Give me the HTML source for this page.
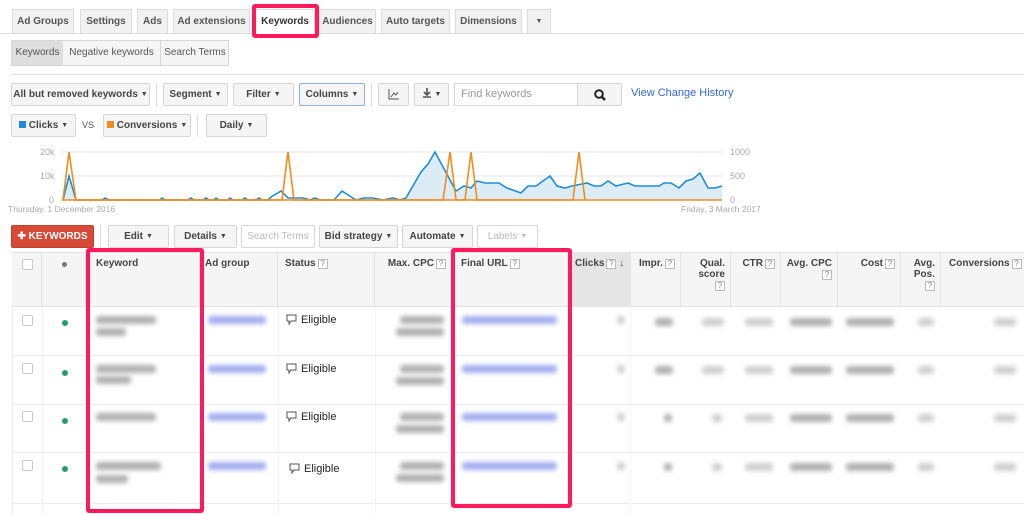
<!DOCTYPE html>
<html><head><meta charset="utf-8"><style>
*{box-sizing:border-box;margin:0;padding:0}
body{width:1024px;height:514px;overflow:hidden;background:#fff;font-family:"Liberation Sans",Arial,sans-serif;font-size:11px;color:#333;position:relative}
.a{position:absolute}
.tab{position:absolute;top:9px;height:24px;background:#f1f1f1;border:1px solid #dcdcdc;border-bottom:none;font-weight:bold;font-size:10px;color:#555;text-align:center;line-height:23px}
.btn{position:absolute;height:23px;background:#f5f5f5;border:1px solid #d6d6d6;border-radius:2px;font-weight:bold;font-size:10px;color:#444;text-align:center;line-height:21px}
.car{font-size:7px;vertical-align:1px;margin-left:3px}
.hd{position:absolute;top:252px;height:55px;border-right:1px solid #e5e5e5;font-weight:bold;font-size:10px;color:#444;padding:6px 5px;white-space:nowrap}
.q{display:inline-block;width:10px;height:10px;border:1px solid #bbb;font-size:8px;line-height:8px;text-align:center;color:#888;font-weight:normal;vertical-align:0;margin-left:2px;background:#fff}
.pink{position:absolute;border:4px solid #ff1a5e;border-radius:3px}
.bl{position:absolute;height:8px;border-radius:3px;filter:blur(2.5px)}
.g{background:#b0b0b0}.b{background:#a3aeee}.lg{background:#cfcfcf}
.cb{position:absolute;width:11px;height:11px;border:1px solid #c8c8c8;border-radius:2px;background:#fff}
.dot{position:absolute;width:6px;height:6px;border-radius:50%;background:#1ea362}
.el{position:absolute;font-size:11px;color:#222}
.el svg{vertical-align:-2px;margin-right:4px}
.rl{position:absolute;left:12px;width:1012px;height:1px;background:#ececec}
</style></head><body>
<div class="a" style="left:0;top:33px;width:1024px;height:1px;background:#dcdcdc"></div>
<div class="tab" style="left:12px;width:62px">Ad Groups</div>
<div class="tab" style="left:80px;width:52px">Settings</div>
<div class="tab" style="left:137px;width:31px">Ads</div>
<div class="tab" style="left:173px;width:77px">Ad extensions</div>
<div class="tab" style="left:255px;width:60px;background:#fff;height:25px;color:#333">Keywords</div>
<div class="tab" style="left:319px;width:57px">Audiences</div>
<div class="tab" style="left:381px;width:69px">Auto targets</div>
<div class="tab" style="left:455px;width:67px">Dimensions</div>
<div class="tab" style="left:527px;width:24px;font-size:7px">▼</div>
<div class="pink" style="left:252px;top:4px;width:67px;height:34px"></div>
<div class="a" style="left:11px;top:40px;height:26px;width:218px;border:1px solid #d6d6d6;background:#f5f5f5;font-size:10px;color:#555;line-height:24px">
<span class="a" style="left:0;top:0;width:51px;height:24px;background:#dedede;text-align:center">Keywords</span>
<span class="a" style="left:51px;width:97px;text-align:center">Negative keywords</span>
<span class="a" style="left:148px;width:69px;text-align:center;border-left:1px solid #d6d6d6">Search Terms</span></div>
<div class="a" style="left:11px;top:74px;width:1013px;height:1px;background:#e0e0e0"></div>
<div class="btn" style="left:11px;top:83px;width:139px">All but removed keywords<span class="car">▼</span></div>
<div class="a" style="left:156px;top:83px;width:1px;height:23px;background:#e0e0e0"></div>
<div class="btn" style="left:163px;top:83px;width:65px">Segment<span class="car">▼</span></div>
<div class="btn" style="left:233px;top:83px;width:61px">Filter<span class="car">▼</span></div>
<div class="btn" style="left:299px;top:83px;width:66px;border-color:#8fb1e6">Columns<span class="car">▼</span></div>
<div class="a" style="left:371px;top:83px;width:1px;height:23px;background:#e0e0e0"></div>
<div class="btn" style="left:378px;top:83px;width:31px"><svg width="12" height="11" style="margin-top:5px"><path d="M1 0V10H11" stroke="#555" fill="none"/><path d="M3 8L6 4L8 6L10 3" stroke="#555" fill="none"/></svg></div>
<div class="btn" style="left:414px;top:83px;width:35px"><svg width="10" height="10" style="vertical-align:-1px"><path d="M5 0V6M2 4L5 7L8 4M1 9H9" stroke="#555" stroke-width="1.6" fill="none"/></svg><span class="car">▼</span></div>
<div class="a" style="left:454px;top:83px;width:124px;height:23px;border:1px solid #d6d6d6;color:#999;font-size:11px;line-height:21px;padding-left:6px">Find keywords</div>
<div class="btn" style="left:577px;top:83px;width:45px;background:#f5f5f5"><svg width="12" height="12" style="margin-top:5px"><circle cx="5" cy="5" r="3.8" stroke="#222" stroke-width="2" fill="none"/><path d="M8 8L11 11" stroke="#222" stroke-width="2.4"/></svg></div>
<div class="a" style="left:631px;top:87px;color:#3367d6;font-size:11px">View Change History</div>
<div class="btn" style="left:11px;top:114px;width:65px"><span style="display:inline-block;width:7px;height:7px;background:#1f8dd6;margin-right:3px"></span>Clicks<span class="car">▼</span></div>
<div class="a" style="left:82px;top:120px;font-size:9px;color:#555">VS</div>
<div class="btn" style="left:103px;top:114px;width:88px"><span style="display:inline-block;width:7px;height:7px;background:#f08c1e;margin-right:3px"></span>Conversions<span class="car">▼</span></div>
<div class="a" style="left:197px;top:114px;width:1px;height:23px;background:#e0e0e0"></div>
<div class="btn" style="left:206px;top:114px;width:61px">Daily<span class="car">▼</span></div>
<svg class="a" style="left:0;top:140px" width="760" height="80">
<g font-family="Liberation Sans" font-size="9" fill="#aaa">
<text x="40" y="15">20k</text><text x="40" y="39">10k</text><text x="49" y="63">0</text>
<text x="730" y="15">1000</text><text x="730" y="39">500</text><text x="730" y="63">0</text>
<text x="8" y="72" font-size="8.5">Thursday, 1 December 2016</text><text x="681" y="72" font-size="8.5">Friday, 3 March 2017</text></g>
<path d="M62 12H722M62 36H722" stroke="#e6e6e6"/>
<path d="M63 60L69 36L76 60Z" fill="#dcecf7"/>
<path d="M406 60L421 32L428 24L435 12L456 51L464 46L471 48L477 41L485 43L499 43L507 48L521 53L528 46L536 46L550 36L557 46L565 48L572 46L587 43L594 46L601 46L608 41L616 46L628 43L635 46L659 46L664 43L671 43L679 48L686 41L693 39L700 33L708 48L715 48L722 46L722 60Z" fill="#dcecf7"/>
<polyline fill="none" stroke="#1f8dd6" stroke-width="1.6" points="63,60 69,36 76,60 102,60 105,58 109,60 160,60 162,58 165,60 188,60 191,58 194,60 203,60 206,58 209,60 214,60 216,58 219,60 228,60 230,58 233,60 242,60 245,58 248,60 256,60 259,58 262,60 268,60 271,57 281,51 288,58 303,58 310,60 315,58 320,60 334,60 342,51 356,60 364,58 373,58 383,60 393,58 400,60 406,58 421,32 428,24 435,12 456,51 464,46 471,48 477,41 485,43 499,43 507,48 521,53 528,46 536,46 550,36 557,46 565,48 572,46 587,43 594,46 601,46 608,41 616,46 628,43 635,46 659,46 664,43 671,43 679,48 686,41 693,39 700,33 708,48 715,48 722,46"/>
<path d="M62 60H722" stroke="#f08c1e" stroke-width="1.6"/>
<polyline fill="none" stroke="#f08c1e" stroke-width="1.6" points="63,60 69,12 76,60 282,60 288,12 294,60 443,60 450,12 456,60 465,60 471,12 477,60 573,60 579,12 585,60"/>
</svg>
<div class="btn" style="left:11px;top:225px;width:83px;background:#d84a38;border-color:#c3402f;color:#fff">✚ KEYWORDS</div>
<div class="a" style="left:100px;top:225px;width:1px;height:23px;background:#e0e0e0"></div>
<div class="btn" style="left:108px;top:225px;width:61px">Edit<span class="car">▼</span></div>
<div class="btn" style="left:174px;top:225px;width:63px">Details<span class="car">▼</span></div>
<div class="btn" style="left:241px;top:225px;width:74px;background:#fff;color:#bbb;font-weight:normal">Search Terms</div>
<div class="btn" style="left:319px;top:225px;width:79px">Bid strategy<span class="car">▼</span></div>
<div class="btn" style="left:402px;top:225px;width:71px">Automate<span class="car">▼</span></div>
<div class="btn" style="left:477px;top:225px;width:61px;background:#fff;color:#bbb;font-weight:normal">Labels<span class="car">▼</span></div>
<div class="a" style="left:12px;top:252px;width:1012px;height:55px;background:#f5f5f5;border-top:1px solid #e2e2e2;border-bottom:1px solid #e2e2e2"></div>
<div class="a" style="left:570px;top:252px;width:61px;height:55px;background:#e6e6e6"></div>
<div class="hd" style="left:12px;width:30px"></div><div class="cb" style="left:22px;top:259px"></div>
<div class="hd" style="left:42px;width:44px"></div><div class="a" style="left:62px;top:262px;width:5px;height:5px;border-radius:50%;background:#777"></div>
<div class="hd" style="left:86px;width:114px;padding-left:10px">Keyword</div>
<div class="hd" style="left:200px;width:78px">Ad group</div>
<div class="hd" style="left:278px;width:97px;padding-left:7px">Status<span class="q">?</span></div>
<div class="hd" style="left:375px;width:77px;text-align:right">Max. CPC<span class="q">?</span></div>
<div class="hd" style="left:452px;width:118px;padding-left:9px">Final URL<span class="q">?</span></div>
<div class="hd" style="left:570px;width:61px">Clicks<span class="q">?</span> ↓</div>
<div class="hd" style="left:631px;width:50px;padding-left:8px">Impr.<span class="q">?</span></div>
<div class="hd" style="left:681px;width:50px;text-align:right">Qual.<br>score<br><span class="q">?</span></div>
<div class="hd" style="left:731px;width:50px;text-align:right">CTR<span class="q">?</span></div>
<div class="hd" style="left:781px;width:57px;text-align:right">Avg. CPC<br><span class="q">?</span></div>
<div class="hd" style="left:838px;width:63px;text-align:right">Cost<span class="q">?</span></div>
<div class="hd" style="left:901px;width:40px;text-align:right">Avg.<br>Pos.<br><span class="q">?</span></div>
<div class="hd" style="left:941px;width:83px;border:none;padding-left:8px">Conversions<span class="q">?</span></div>
<div class="rl" style="top:355px"></div><div class="rl" style="top:404px"></div><div class="rl" style="top:452px"></div><div class="rl" style="top:503px"></div>
<div class="a" style="left:12px;top:307px;width:1px;height:207px;background:#ececec"></div>
<div class="a" style="left:42px;top:307px;width:1px;height:207px;background:#f2f2f2"></div>
<div class="a" style="left:278px;top:307px;width:1px;height:207px;background:#f2f2f2"></div>
<div class="a" style="left:375px;top:307px;width:1px;height:207px;background:#f2f2f2"></div>
<div class="a" style="left:630px;top:307px;width:1px;height:207px;background:#f6f6f6"></div>
<div class="cb" style="left:22px;top:315px"></div><div class="dot" style="left:62px;top:320px"></div>
<div class="cb" style="left:22px;top:363px"></div><div class="dot" style="left:62px;top:370px"></div>
<div class="cb" style="left:22px;top:411px"></div><div class="dot" style="left:62px;top:418px"></div>
<div class="cb" style="left:22px;top:460px"></div><div class="dot" style="left:62px;top:466px"></div>
<div class="bl g" style="left:96px;top:316px;width:60px"></div><div class="bl g" style="left:96px;top:328px;width:30px"></div>
<div class="bl g" style="left:96px;top:365px;width:60px"></div><div class="bl g" style="left:96px;top:376px;width:35px"></div>
<div class="bl g" style="left:96px;top:413px;width:60px"></div>
<div class="bl g" style="left:96px;top:462px;width:65px"></div><div class="bl g" style="left:96px;top:475px;width:32px"></div>
<div class="bl b" style="left:208px;top:316px;width:58px"></div>
<div class="bl b" style="left:208px;top:365px;width:58px"></div>
<div class="bl b" style="left:208px;top:413px;width:58px"></div>
<div class="bl b" style="left:208px;top:462px;width:58px"></div>
<div class="el" style="left:286px;top:314px"><svg width="11" height="11"><path d="M1 1H10V7H5L3 10V7H1Z" fill="none" stroke="#555"/></svg>Eligible</div>
<div class="el" style="left:286px;top:363px"><svg width="11" height="11"><path d="M1 1H10V7H5L3 10V7H1Z" fill="none" stroke="#555"/></svg>Eligible</div>
<div class="el" style="left:286px;top:411px"><svg width="11" height="11"><path d="M1 1H10V7H5L3 10V7H1Z" fill="none" stroke="#555"/></svg>Eligible</div>
<div class="el" style="left:289px;top:463px"><svg width="11" height="11"><path d="M1 1H10V7H5L3 10V7H1Z" fill="none" stroke="#555"/></svg>Eligible</div>
<div class="bl g" style="left:400px;top:316px;width:44px"></div><div class="bl g" style="left:396px;top:328px;width:48px"></div>
<div class="bl g" style="left:400px;top:365px;width:44px"></div><div class="bl g" style="left:396px;top:377px;width:48px"></div>
<div class="bl g" style="left:400px;top:413px;width:44px"></div><div class="bl g" style="left:396px;top:425px;width:48px"></div>
<div class="bl g" style="left:400px;top:462px;width:44px"></div><div class="bl g" style="left:396px;top:474px;width:48px"></div>
<div class="bl b" style="left:462px;top:316px;width:95px"></div>
<div class="bl b" style="left:462px;top:365px;width:95px"></div>
<div class="bl b" style="left:462px;top:413px;width:95px"></div>
<div class="bl b" style="left:462px;top:462px;width:95px"></div>
<div class="bl lg" style="left:617px;top:316px;width:8px"></div><div class="bl lg" style="left:617px;top:365px;width:8px"></div><div class="bl lg" style="left:617px;top:413px;width:8px"></div><div class="bl lg" style="left:617px;top:462px;width:8px"></div>
<div class="bl g" style="left:655px;top:318px;width:18px"></div><div class="bl g" style="left:655px;top:366px;width:18px"></div><div class="bl g" style="left:664px;top:414px;width:8px"></div><div class="bl g" style="left:664px;top:463px;width:8px"></div>
<div class="bl lg" style="left:702px;top:318px;width:22px"></div><div class="bl lg" style="left:702px;top:366px;width:22px"></div><div class="bl lg" style="left:712px;top:414px;width:10px"></div><div class="bl lg" style="left:712px;top:463px;width:10px"></div>
<div class="bl lg" style="left:745px;top:318px;width:28px"></div><div class="bl lg" style="left:745px;top:366px;width:28px"></div><div class="bl lg" style="left:745px;top:414px;width:28px"></div><div class="bl lg" style="left:745px;top:463px;width:28px"></div>
<div class="bl g" style="left:790px;top:318px;width:42px"></div><div class="bl g" style="left:790px;top:366px;width:42px"></div><div class="bl g" style="left:790px;top:414px;width:42px"></div><div class="bl g" style="left:790px;top:463px;width:42px"></div>
<div class="bl g" style="left:846px;top:318px;width:48px"></div><div class="bl g" style="left:846px;top:366px;width:48px"></div><div class="bl g" style="left:846px;top:414px;width:48px"></div><div class="bl g" style="left:846px;top:463px;width:48px"></div>
<div class="bl lg" style="left:918px;top:318px;width:16px"></div><div class="bl lg" style="left:918px;top:366px;width:16px"></div><div class="bl lg" style="left:918px;top:414px;width:16px"></div><div class="bl lg" style="left:918px;top:463px;width:16px"></div>
<div class="bl lg" style="left:994px;top:318px;width:22px"></div><div class="bl lg" style="left:994px;top:366px;width:22px"></div><div class="bl lg" style="left:994px;top:414px;width:22px"></div><div class="bl lg" style="left:994px;top:463px;width:22px"></div>
<div class="pink" style="left:86px;top:248px;width:118px;height:265px"></div>
<div class="pink" style="left:451px;top:248px;width:121px;height:260px"></div>
</body></html>
